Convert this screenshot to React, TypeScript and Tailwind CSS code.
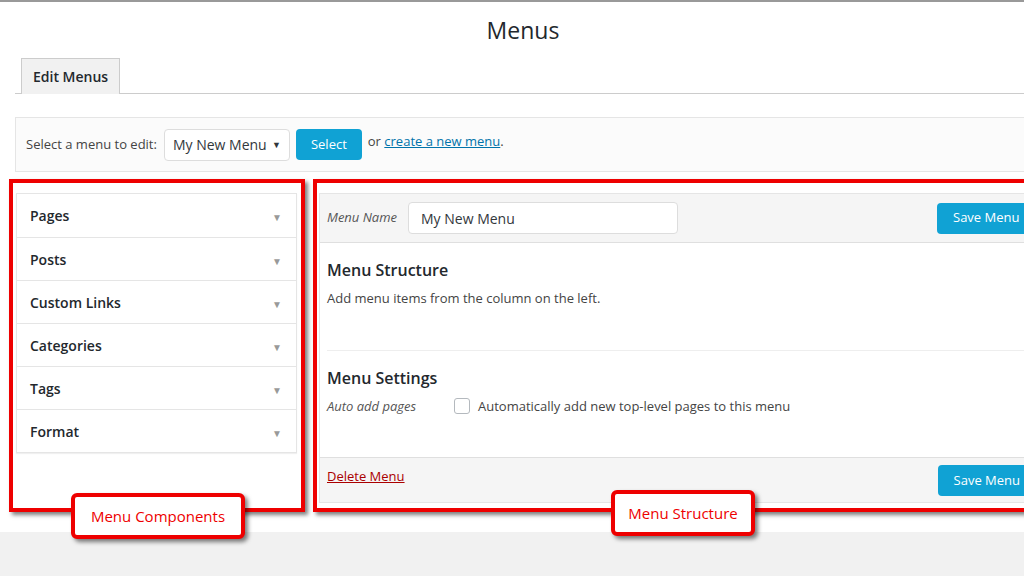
import React from 'react';

const items = ['Pages', 'Posts', 'Custom Links', 'Categories', 'Tags', 'Format'];

const Caret = () => <span className="text-[10px] text-[#999] mt-[4px]">▼</span>;

export default function App() {
  return (
    <div className="w-[1024px] h-[576px] overflow-hidden bg-[#f1f1f1] text-[#23282d]" style={{ fontFamily: '"Open Sans", sans-serif' }}>
      <div className="bg-white h-[532px] border-t-2 border-[#999]">
        <h1 className="text-center text-[23px] pt-[13px] pl-[22px] h-[56px] leading-[30px]">Menus</h1>

        {/* tabs */}
        <div className="ml-[15px] flex border-b border-[#ccc] h-[36px]">
          <div className="ml-[6px] px-[11px] h-[36px] border border-b-0 border-[#ccc] bg-[#f1f1f1] text-[14px] font-semibold flex items-center mb-[-1px]">Edit Menus</div>
        </div>

        {/* select bar */}
        <div className="ml-[15px] mt-[23px] h-[55px] border border-[#e5e5e5] border-r-0 bg-[#fbfbfb] flex items-center pl-[10px] text-[13px] text-[#444]">
          <span>Select a menu to edit:</span>
          <div className="ml-[7px] w-[126px] h-[32px] border border-[#ddd] rounded bg-white flex items-center justify-between px-[8px] text-[14px] text-[#32373c]">
            My New Menu <span className="text-[9px]">▼</span>
          </div>
          <div className="ml-[6px] h-[31px] px-[15px] rounded bg-[#10a2d4] text-white text-[13px] flex items-center">Select</div>
          <span className="ml-[6px] mb-[6px]">or <span className="text-[#0073aa] underline">create a new menu</span>.</span>
        </div>

        <div className="flex mt-[7px] pl-[9px] gap-[8px]">
          {/* left */}
          <div className="relative shrink-0 w-[296px] h-[333px] border-4 border-[#e00] shadow-[3px_3px_4px_rgba(0,0,0,0.5)] pt-[10px] pl-[3px]">
            <div className="w-[281px] border border-[#e5e5e5] bg-white shadow-[0_1px_1px_rgba(0,0,0,0.06)]">
              {items.map((t, i) => (
                <div key={t} className={`h-[43px] flex items-center justify-between pl-[13px] pr-[14px] text-[14px] font-semibold ${i ? 'border-t border-[#e5e5e5]' : ''}`}>
                  {t}<Caret />
                </div>
              ))}
            </div>
            <div className="absolute left-[58px] top-[310px] w-[174px] h-[46px] bg-white border-4 border-[#e00] rounded-[6px] shadow-[3px_3px_4px_rgba(0,0,0,0.5)] flex items-center justify-center text-[#e00] text-[15px]">Menu Components</div>
          </div>

          {/* right */}
          <div className="relative shrink-0 w-[760px] h-[333px] border-4 border-[#e00] shadow-[3px_3px_4px_rgba(0,0,0,0.5)] pt-[10px] pl-[2px]">
            <div className="border border-[#e5e5e5] bg-white h-[310px] flex flex-col">
              <div className="h-[49px] bg-[#f5f5f5] border-b border-[#dfdfdf] flex items-center pl-[7px]">
                <span className="italic text-[13px] text-[#555]">Menu Name</span>
                <div className="ml-[11px] w-[270px] h-[32px] border border-[#ddd] rounded bg-white flex items-center px-[12px] text-[14px] text-[#32373c]">My New Menu</div>
                <div className="ml-[259px] h-[31px] w-[100px] rounded-l bg-[#10a2d4] text-white text-[13px] flex items-center pl-[16px]">Save Menu</div>
              </div>
              <div className="px-[7px]">
                <h3 className="text-[16px] font-semibold mt-[15px]">Menu Structure</h3>
                <p className="text-[13px] text-[#444] mt-[7px]">Add menu items from the column on the left.</p>
                <div className="border-t border-[#eee] mt-[41px]"></div>
                <h3 className="text-[16px] font-semibold mt-[15px]">Menu Settings</h3>
                <div className="flex items-center mt-[7px] text-[13px]">
                  <span className="italic text-[#555] w-[127px]">Auto add pages</span>
                  <span className="w-[16px] h-[16px] border border-[#b4b9be] rounded-[3px] mr-[8px]"></span>
                  <span className="text-[#444]">Automatically add new top-level pages to this menu</span>
                </div>
              </div>
              <div className="mt-auto h-[45px] bg-[#f5f5f5] border-t border-[#dfdfdf] flex items-start pt-[7px] pl-[7px]">
                <span className="text-[13px] text-[#a00] underline mt-[2px]">Delete Menu</span>
                <div className="ml-[533px] h-[31px] w-[100px] rounded-l bg-[#10a2d4] text-white text-[13px] flex items-center pl-[16px]">Save Menu</div>
              </div>
            </div>
            <div className="absolute left-[294px] top-[307px] w-[144px] h-[46px] bg-white border-4 border-[#e00] rounded-[6px] shadow-[3px_3px_4px_rgba(0,0,0,0.5)] flex items-center justify-center text-[#e00] text-[15px]">Menu Structure</div>
          </div>
        </div>
      </div>
    </div>
  );
}
